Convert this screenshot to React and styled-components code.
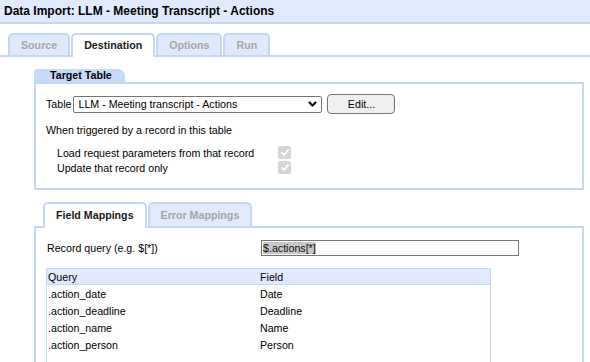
import React from 'react';
import styled, { createGlobalStyle } from 'styled-components';

const C = {
  light: '#e1e9fc',
  border: '#c5d7f7',
  head: '#c8dafa',
  muted: '#a6a6a6',
  text: '#1a1a1a',
};

const Global = createGlobalStyle`
  html, body { margin: 0; padding: 0; background: #fff; overflow: hidden; }
  body {
    font-family: "Liberation Sans", Arial, sans-serif;
    font-size: 10.667px;
    color: #000;
  }
`;

const Page = styled.div`
  width: 590px;
  height: 362px;
  overflow: hidden;
`;

const TitleBar = styled.div`
  height: 22px;
  line-height: 22px;
  padding-left: 4px;
  background: ${C.light};
  border-bottom: 2px solid ${C.border};
  font-size: 12px;
  font-weight: bold;
  color: #000;
  white-space: nowrap;
`;

const TabStrip = styled.div`
  display: flex;
  align-items: flex-end;
  gap: ${(p) => p.$gap}px;
  padding-left: ${(p) => p.$inset}px;
  margin-top: ${(p) => p.$top}px;
  border-bottom: 2px solid ${C.border};
`;

const Tab = styled.div`
  box-sizing: border-box;
  height: ${(p) => p.$h + (p.$active ? 2 : 0)}px;
  margin-bottom: ${(p) => (p.$active ? -2 : 0)}px;
  padding: 0 11px ${(p) => (p.$active ? 2 : 0)}px;
  border: 2px solid ${C.border};
  border-bottom: none;
  border-radius: 5px 5px 0 0;
  background: ${(p) => (p.$active ? '#fff' : C.light)};
  color: ${(p) => (p.$active ? C.text : C.muted)};
  font-weight: bold;
  display: flex;
  align-items: center;
  white-space: nowrap;
`;

const Content = styled.div`
  padding: 12px 6px 0 34px;
`;

const SectionHead = styled.div`
  width: fit-content;
  height: 13px;
  line-height: 13px;
  padding: 0 13px 0 16px;
  background: ${C.head};
  border-radius: 3px 7px 0 0;
  font-weight: bold;
  color: #000;
`;

const Box = styled.div`
  border: 2px solid ${C.border};
  ${(p) => (p.$open ? 'border-top: none;' : '')}
  padding: ${(p) => p.$pad};
`;

const Row = styled.div`
  display: flex;
  align-items: center;
`;

const Label = styled.span`
  margin-right: 2px;
  white-space: nowrap;
`;

const Select = styled.div`
  box-sizing: border-box;
  width: 249px;
  height: 17px;
  border: 1px solid #767676;
  border-radius: 2px;
  display: flex;
  align-items: center;
  justify-content: space-between;
  padding: 0 4px 0 4px;
  background: #fff;
  white-space: nowrap;
`;

const Button = styled.div`
  box-sizing: border-box;
  width: 68px;
  height: 20px;
  margin-left: 5px;
  border: 1px solid #767676;
  border-radius: 4px;
  background: #efefef;
  display: flex;
  align-items: center;
  justify-content: center;
  color: #000;
`;

const Note = styled.div`
  margin-top: 8px;
  line-height: 16px;
`;

const Options = styled.div`
  margin-top: 7px;
  padding-left: 11px;
  display: grid;
  grid-template-columns: 221px 13px;
  grid-auto-rows: 15px;
  align-items: center;
`;

const Check = styled.div`
  width: 13px;
  height: 13px;
  border-radius: 2px;
  background: #d6d6d6;
  display: flex;
  align-items: center;
  justify-content: center;
`;

const Section = styled.div`
  margin-top: ${(p) => p.$top}px;
`;

const QueryRow = styled.div`
  display: grid;
  grid-template-columns: 214px 258px;
  align-items: center;
  padding-left: 1px;
`;

const TextInput = styled.div`
  box-sizing: border-box;
  height: 16px;
  border: 1px solid #767676;
  padding: 0 1px;
  display: flex;
  align-items: center;
  background: #fff;
`;

const Selected = styled.span`
  background: #c8c8c8;
  line-height: 12px;
  color: #111;
`;

const Grid = styled.div`
  margin-top: 12px;
  width: 443px;
  height: 120px;
  border: 1px solid ${C.border};
  border-bottom: none;
`;

const GridRow = styled.div`
  display: grid;
  grid-template-columns: 212px 1fr;
  height: ${(p) => (p.$head ? 15 : 17)}px;
  align-items: center;
  background: ${(p) => (p.$head ? C.light : '#fff')};
  border-bottom: ${(p) => (p.$head ? `1px solid ${C.border}` : 'none')};
`;

const Cell = styled.div`
  padding-left: 1px;
  white-space: nowrap;
`;

const Chevron = () => (
  <svg width="9" height="6" viewBox="0 0 9 6">
    <path d="M1 1 L4.5 4.5 L8 1" fill="none" stroke="#000" strokeWidth="2" />
  </svg>
);

const Tick = () => (
  <svg width="10" height="9" viewBox="0 0 10 9">
    <path d="M1.5 4.5 L4 7 L8.5 1.5" fill="none" stroke="#fff" strokeWidth="1.8" />
  </svg>
);

const mappings = [
  ['.action_date', 'Date'],
  ['.action_deadline', 'Deadline'],
  ['.action_name', 'Name'],
  ['.action_person', 'Person'],
];

export default function App() {
  return (
    <Page>
      <Global />
      <TitleBar>Data Import: LLM - Meeting Transcript - Actions</TitleBar>
      <TabStrip $gap={1} $inset={8} $top={9}>
        <Tab $h={22}>Source</Tab>
        <Tab $h={22} $active>Destination</Tab>
        <Tab $h={22}>Options</Tab>
        <Tab $h={22}>Run</Tab>
      </TabStrip>
      <Content>
        <SectionHead>Target Table</SectionHead>
        <Box $pad="10px 10px 13px 10px">
          <Row>
            <Label>Table</Label>
            <Select>
              <span>LLM - Meeting transcript - Actions</span>
              <Chevron />
            </Select>
            <Button>Edit...</Button>
          </Row>
          <Note>When triggered by a record in this table</Note>
          <Options>
            <span>Load request parameters from that record</span>
            <Check><Tick /></Check>
            <span>Update that record only</span>
            <Check><Tick /></Check>
          </Options>
        </Box>
        <Section $top={12}>
          <TabStrip $gap={1} $inset={9} $top={0}>
            <Tab $h={24} $active>Field Mappings</Tab>
            <Tab $h={24}>Error Mappings</Tab>
          </TabStrip>
          <Box $open $pad="12px 10px 0 10px">
            <QueryRow>
              <span>Record query (e.g. $[*])</span>
              <TextInput>
                <Selected>$.actions[*]</Selected>
              </TextInput>
            </QueryRow>
            <Grid>
              <GridRow $head>
                <Cell>Query</Cell>
                <Cell>Field</Cell>
              </GridRow>
              {mappings.map(([q, f]) => (
                <GridRow key={q}>
                  <Cell>{q}</Cell>
                  <Cell>{f}</Cell>
                </GridRow>
              ))}
            </Grid>
          </Box>
        </Section>
      </Content>
    </Page>
  );
}
